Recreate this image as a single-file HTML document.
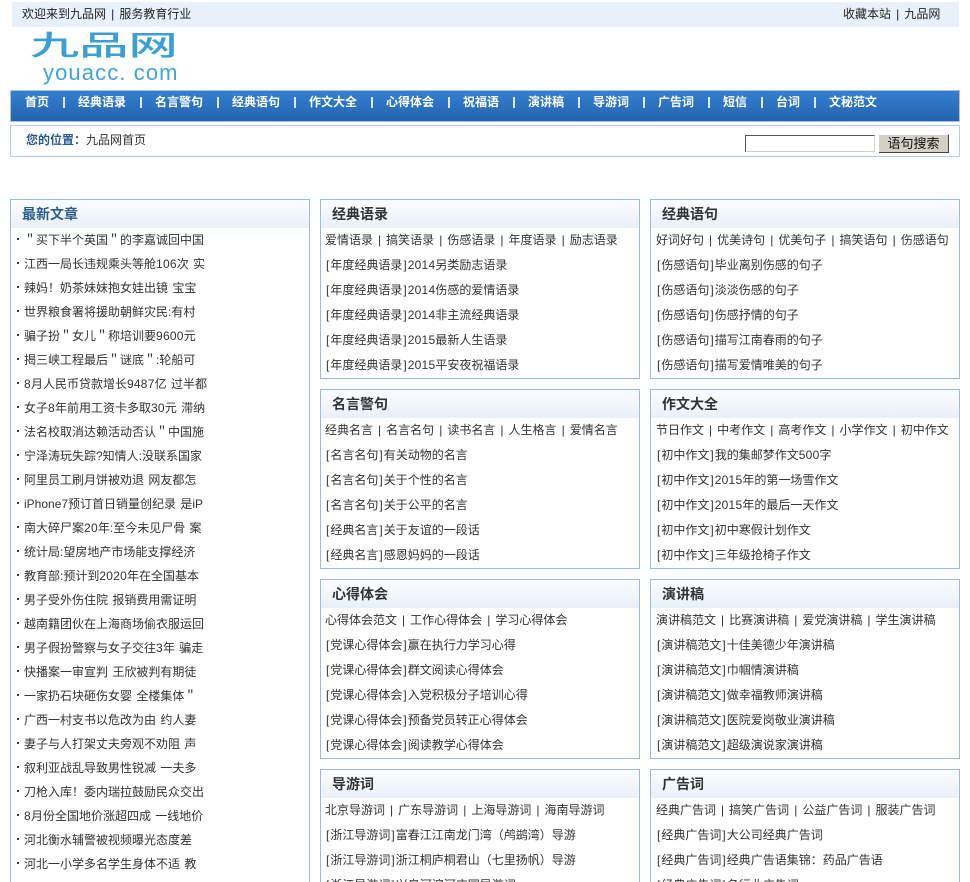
<!DOCTYPE html>
<html lang="zh"><head><meta charset="utf-8"><title>九品网</title>
<style>
*{margin:0;padding:0;box-sizing:border-box}
html,body{width:970px;height:882px;overflow:hidden;background:#fff}
body{position:relative;font:12px/24px "Liberation Sans","WenQuanYi Zen Hei","Noto Sans CJK SC",sans-serif;color:#333}
.a{position:absolute;white-space:nowrap}
#top{left:12px;top:2px;width:947px;height:25px;background:#e8f0fa;line-height:25px;color:#222;word-spacing:1.8px}
#nav{left:10px;top:90px;width:950px;height:32px;border:1px solid #a9c2dd;background:linear-gradient(#3380d0,#2463b0)}
.n{position:absolute;top:90px;line-height:25px;color:#fff;font-weight:bold}
.p{position:absolute;top:97px;width:2px;height:11px;background:#dfe9f6}
#crumb{left:10px;top:125px;width:950px;height:32px;border:1px solid #b4cbe1}
.box{position:absolute;border:1px solid #9dbcdc;overflow:hidden;background:#fff}
.box.cut{border-bottom:0}
.box h3{height:28px;line-height:29px;padding-left:11px;font-size:14px;color:#333;background:linear-gradient(#fbfdff,#e8f0f8)}
.r{position:absolute;left:4px;white-space:nowrap;line-height:25px;word-spacing:1.7px}
.rc .r{left:5px}
.l{position:absolute;left:5px;white-space:nowrap;line-height:24px;word-spacing:1px}
.l b{display:inline-block;width:2px;height:2px;background:#333;margin:0 5px 4px 1px;vertical-align:middle}
i{font-style:normal;padding:0 1px}
em{font-style:normal;letter-spacing:.25px}
</style></head><body>
<div class="a" id="top"><span class="a" style="left:10px">欢迎来到九品网 | 服务教育行业</span><span class="a" style="left:831px">收藏本站 | 九品网</span></div>
<div class="a" style="left:30px;top:22px;font-size:28px;line-height:44px;color:#3c9fd3;font-weight:500;transform:scaleX(1.76);transform-origin:0 0;font-family:'Noto Sans CJK SC',sans-serif">九品网</div>
<div class="a" style="left:43px;top:62px;font-size:22px;line-height:22px;color:#42a3d6;letter-spacing:1.1px">youacc. com</div>
<div class="a" id="nav"></div>
<span class="n" style="left:25px">首页</span><span class="n" style="left:78px">经典语录</span><span class="n" style="left:155px">名言警句</span><span class="n" style="left:232px">经典语句</span><span class="n" style="left:309px">作文大全</span><span class="n" style="left:386px">心得体会</span><span class="n" style="left:463px">祝福语</span><span class="n" style="left:528px">演讲稿</span><span class="n" style="left:593px">导游词</span><span class="n" style="left:658px">广告词</span><span class="n" style="left:723px">短信</span><span class="n" style="left:776px">台词</span><span class="n" style="left:829px">文秘范文</span>
<div class="p" style="left:63px"></div><div class="p" style="left:140px"></div><div class="p" style="left:217px"></div><div class="p" style="left:294px"></div><div class="p" style="left:371px"></div><div class="p" style="left:448px"></div><div class="p" style="left:513px"></div><div class="p" style="left:578px"></div><div class="p" style="left:643px"></div><div class="p" style="left:708px"></div><div class="p" style="left:761px"></div><div class="p" style="left:814px"></div>
<div class="a" id="crumb"></div>
<div class="a" style="left:26px;top:128px"><b style="color:#2a5a8e">您的位置：</b>九品网首页</div>
<div class="a" style="left:745px;top:135px;width:130px;height:17px;border:1px solid;border-color:#555 #d4d0c8 #d4d0c8 #555;background:#fff"></div>
<div class="a" style="left:879px;top:134px;width:70px;height:19px;background:#d4d0c8;border-right:1px solid #444;border-bottom:1px solid #444;border-top:1px solid #fff;text-align:center;line-height:18px;color:#111;font-size:13px">语句搜索</div>

<div class="box cut" style="left:10px;top:199px;width:300px;height:683px"><h3 style="color:#2a5a8e">最新文章</h3>
<div class="l" style="top:28px"><b></b>＂买下半个英国＂的李嘉诚回中国</div>
<div class="l" style="top:52px"><b></b>江西一局长违规乘头等舱<em>106</em>次 实</div>
<div class="l" style="top:76px"><b></b>辣妈！奶茶妹妹抱女娃出镜 宝宝</div>
<div class="l" style="top:100px"><b></b>世界粮食署将援助朝鲜灾民:有村</div>
<div class="l" style="top:124px"><b></b>骗子扮＂女儿＂称培训要<em>9600</em>元</div>
<div class="l" style="top:148px"><b></b>揭三峡工程最后＂谜底＂:轮船可</div>
<div class="l" style="top:172px"><b></b><em>8</em>月人民币贷款增长<em>9487</em>亿 过半都</div>
<div class="l" style="top:196px"><b></b>女子<em>8</em>年前用工资卡多取<em>30</em>元 滞纳</div>
<div class="l" style="top:220px"><b></b>法名校取消达赖活动否认＂中国施</div>
<div class="l" style="top:244px"><b></b>宁泽涛玩失踪?知情人:没联系国家</div>
<div class="l" style="top:268px"><b></b>阿里员工刷月饼被劝退 网友都怎</div>
<div class="l" style="top:292px"><b></b>iPhone7预订首日销量创纪录 是iP</div>
<div class="l" style="top:316px"><b></b>南大碎尸案<em>20</em>年:至今未见尸骨 案</div>
<div class="l" style="top:340px"><b></b>统计局:望房地产市场能支撑经济</div>
<div class="l" style="top:364px"><b></b>教育部:预计到<em>2020</em>年在全国基本</div>
<div class="l" style="top:388px"><b></b>男子受外伤住院 报销费用需证明</div>
<div class="l" style="top:412px"><b></b>越南籍团伙在上海商场偷衣服运回</div>
<div class="l" style="top:436px"><b></b>男子假扮警察与女子交往<em>3</em>年 骗走</div>
<div class="l" style="top:460px"><b></b>快播案一审宣判 王欣被判有期徒</div>
<div class="l" style="top:484px"><b></b>一家扔石块砸伤女婴 全楼集体＂</div>
<div class="l" style="top:508px"><b></b>广西一村支书以危改为由 约人妻</div>
<div class="l" style="top:532px"><b></b>妻子与人打架丈夫旁观不劝阻 声</div>
<div class="l" style="top:556px"><b></b>叙利亚战乱导致男性锐减 一夫多</div>
<div class="l" style="top:580px"><b></b>刀枪入库！委内瑞拉鼓励民众交出</div>
<div class="l" style="top:604px"><b></b><em>8</em>月份全国地价涨超四成 一线地价</div>
<div class="l" style="top:628px"><b></b>河北衡水辅警被视频曝光态度差</div>
<div class="l" style="top:652px"><b></b>河北一小学多名学生身体不适 教</div>
</div>

<div class="box" style="left:320px;top:199px;width:320px;height:180px"><h3>经典语录</h3>
<div class="r" style="top:28px">爱情语录 | 搞笑语录 | 伤感语录 | 年度语录 | 励志语录</div>
<div class="r" style="top:53px"><i>[</i>年度经典语录<i>]</i><em>2014</em>另类励志语录</div>
<div class="r" style="top:78px"><i>[</i>年度经典语录<i>]</i><em>2014</em>伤感的爱情语录</div>
<div class="r" style="top:103px"><i>[</i>年度经典语录<i>]</i><em>2014</em>非主流经典语录</div>
<div class="r" style="top:128px"><i>[</i>年度经典语录<i>]</i><em>2015</em>最新人生语录</div>
<div class="r" style="top:153px"><i>[</i>年度经典语录<i>]</i><em>2015</em>平安夜祝福语录</div></div>

<div class="box rc" style="left:650px;top:199px;width:310px;height:180px"><h3>经典语句</h3>
<div class="r" style="top:28px">好词好句 | 优美诗句 | 优美句子 | 搞笑语句 | 伤感语句</div>
<div class="r" style="top:53px"><i>[</i>伤感语句<i>]</i>毕业离别伤感的句子</div>
<div class="r" style="top:78px"><i>[</i>伤感语句<i>]</i>淡淡伤感的句子</div>
<div class="r" style="top:103px"><i>[</i>伤感语句<i>]</i>伤感抒情的句子</div>
<div class="r" style="top:128px"><i>[</i>伤感语句<i>]</i>描写江南春雨的句子</div>
<div class="r" style="top:153px"><i>[</i>伤感语句<i>]</i>描写爱情唯美的句子</div></div>

<div class="box" style="left:320px;top:389px;width:320px;height:180px"><h3>名言警句</h3>
<div class="r" style="top:28px">经典名言 | 名言名句 | 读书名言 | 人生格言 | 爱情名言</div>
<div class="r" style="top:53px"><i>[</i>名言名句<i>]</i>有关动物的名言</div>
<div class="r" style="top:78px"><i>[</i>名言名句<i>]</i>关于个性的名言</div>
<div class="r" style="top:103px"><i>[</i>名言名句<i>]</i>关于公平的名言</div>
<div class="r" style="top:128px"><i>[</i>经典名言<i>]</i>关于友谊的一段话</div>
<div class="r" style="top:153px"><i>[</i>经典名言<i>]</i>感恩妈妈的一段话</div></div>

<div class="box rc" style="left:650px;top:389px;width:310px;height:180px"><h3>作文大全</h3>
<div class="r" style="top:28px">节日作文 | 中考作文 | 高考作文 | 小学作文 | 初中作文</div>
<div class="r" style="top:53px"><i>[</i>初中作文<i>]</i>我的集邮梦作文<em>500</em>字</div>
<div class="r" style="top:78px"><i>[</i>初中作文<i>]</i><em>2015</em>年的第一场雪作文</div>
<div class="r" style="top:103px"><i>[</i>初中作文<i>]</i><em>2015</em>年的最后一天作文</div>
<div class="r" style="top:128px"><i>[</i>初中作文<i>]</i>初中寒假计划作文</div>
<div class="r" style="top:153px"><i>[</i>初中作文<i>]</i>三年级抢椅子作文</div></div>

<div class="box" style="left:320px;top:579px;width:320px;height:180px"><h3>心得体会</h3>
<div class="r" style="top:28px">心得体会范文 | 工作心得体会 | 学习心得体会</div>
<div class="r" style="top:53px"><i>[</i>党课心得体会<i>]</i>赢在执行力学习心得</div>
<div class="r" style="top:78px"><i>[</i>党课心得体会<i>]</i>群文阅读心得体会</div>
<div class="r" style="top:103px"><i>[</i>党课心得体会<i>]</i>入党积极分子培训心得</div>
<div class="r" style="top:128px"><i>[</i>党课心得体会<i>]</i>预备党员转正心得体会</div>
<div class="r" style="top:153px"><i>[</i>党课心得体会<i>]</i>阅读教学心得体会</div></div>

<div class="box rc" style="left:650px;top:579px;width:310px;height:180px"><h3>演讲稿</h3>
<div class="r" style="top:28px">演讲稿范文 | 比赛演讲稿 | 爱党演讲稿 | 学生演讲稿</div>
<div class="r" style="top:53px"><i>[</i>演讲稿范文<i>]</i>十佳美德少年演讲稿</div>
<div class="r" style="top:78px"><i>[</i>演讲稿范文<i>]</i>巾帼情演讲稿</div>
<div class="r" style="top:103px"><i>[</i>演讲稿范文<i>]</i>做幸福教师演讲稿</div>
<div class="r" style="top:128px"><i>[</i>演讲稿范文<i>]</i>医院爱岗敬业演讲稿</div>
<div class="r" style="top:153px"><i>[</i>演讲稿范文<i>]</i>超级演说家演讲稿</div></div>

<div class="box cut" style="left:320px;top:769px;width:320px;height:113px"><h3>导游词</h3>
<div class="r" style="top:28px">北京导游词 | 广东导游词 | 上海导游词 | 海南导游词</div>
<div class="r" style="top:53px"><i>[</i>浙江导游词<i>]</i>富春江江南龙门湾（鸬鹚湾）导游</div>
<div class="r" style="top:78px"><i>[</i>浙江导游词<i>]</i>浙江桐庐桐君山（七里扬帆）导游</div>
<div class="r" style="top:103px"><i>[</i>浙江导游词<i>]</i>兴皇河滨河庄园导游词</div></div>

<div class="box rc cut" style="left:650px;top:769px;width:310px;height:113px"><h3>广告词</h3>
<div class="r" style="top:28px">经典广告词 | 搞笑广告词 | 公益广告词 | 服装广告词</div>
<div class="r" style="top:53px"><i>[</i>经典广告词<i>]</i>大公司经典广告词</div>
<div class="r" style="top:78px"><i>[</i>经典广告词<i>]</i>经典广告语集锦：药品广告语</div>
<div class="r" style="top:103px"><i>[</i>经典广告词<i>]</i>名行业广告词</div></div>
</body></html>
